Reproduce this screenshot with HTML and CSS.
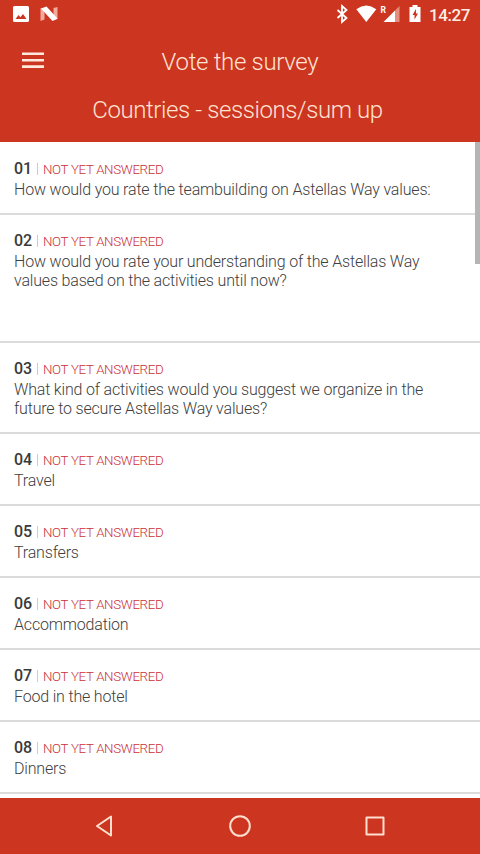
FILE: index.html
```html
<!DOCTYPE html>
<html lang="en">
<head>
<meta charset="utf-8">
<title>Vote the survey</title>
<link rel="stylesheet" href="styles.css">
</head>
<body>
<div class="screen">
  <header class="header">
    <div class="status">
      <svg class="status-left" width="60" height="28" viewBox="0 0 60 28">
        <path fill="#fff" fill-rule="evenodd" d="M14.5 6h13a1.5 1.5 0 0 1 1.500 1.500v13a1.500 1.500 0 0 1-1.500 1.500h-13a1.500 1.500 0 0 1-1.500-1.500v-13A1.500 1.500 0 0 1 14.500 6zM15.500 19h11l-3.500-5-2.600 3.200-1.900-2.200z"/>
        <path fill="#f3aa9c" d="M40.500 8l4 2v9.500l-4 1.500zM53.500 8l4-1v12l-4 1.500z"/>
        <path fill="#fff" d="M41 8.500l5.500-2L57.500 18.500 52.500 21z"/>
      </svg>
      <svg class="status-right" width="95" height="28" viewBox="334 0 95 28">
        <path fill="none" stroke="#fff" stroke-width="1.800" d="M337.500 10l9 8-4.500 4V6l4.500 4-9 8"/>
        <path fill="#fff" d="M356.300 9.200Q366.300 2 376.300 9.200L366.300 22z"/>
        <text class="roaming" x="380.500" y="13">R</text>
        <path fill="#fff" d="M383.500 22L395 10.500V22z"/>
        <path fill="#e58e7e" d="M395 10.500L399.500 6v16H395z"/>
        <path fill="#fff" fill-rule="evenodd" d="M409.500 7h3V5h5v2h3v15h-11zM416 9l-3.500 6h2v4.500l3.500-6h-2z"/>
      </svg>
      <span class="time">14:27</span>
    </div>
    <div class="bar">
      <svg class="menu" width="22" height="18" viewBox="0 0 22 18"><path stroke="#ffeadd" stroke-width="2.600" d="M0 2.800h22M0 9.300h22M0 15.600h22"/></svg>
      <h1 class="title">Vote the survey</h1>
    </div>
    <h2 class="subtitle">Countries - sessions/sum up</h2>
  </header>
  <main class="list">
    <section class="row first"><div class="meta"><b>01</b><i></i><span>NOT YET ANSWERED</span></div><p>How would you rate the teambuilding on Astellas Way values:</p></section>
    <section class="row tall"><div class="meta"><b>02</b><i></i><span>NOT YET ANSWERED</span></div><p>How would you rate your understanding of the Astellas Way<br>values based on the activities until now?</p></section>
    <section class="row double"><div class="meta"><b>03</b><i></i><span>NOT YET ANSWERED</span></div><p>What kind of activities would you suggest we organize in the<br>future to secure Astellas Way values?</p></section>
    <section class="row"><div class="meta"><b>04</b><i></i><span>NOT YET ANSWERED</span></div><p>Travel</p></section>
    <section class="row"><div class="meta"><b>05</b><i></i><span>NOT YET ANSWERED</span></div><p>Transfers</p></section>
    <section class="row"><div class="meta"><b>06</b><i></i><span>NOT YET ANSWERED</span></div><p>Accommodation</p></section>
    <section class="row"><div class="meta"><b>07</b><i></i><span>NOT YET ANSWERED</span></div><p>Food in the hotel</p></section>
    <section class="row"><div class="meta"><b>08</b><i></i><span>NOT YET ANSWERED</span></div><p>Dinners</p></section>
    <div class="scrollbar"></div>
  </main>
  <nav class="nav">
    <svg width="24" height="24" viewBox="0 0 24 24"><path d="M4 12L18 2.500v19z"/></svg>
    <svg width="24" height="24" viewBox="0 0 24 24"><circle cx="12" cy="12" r="9.800"/></svg>
    <svg width="24" height="24" viewBox="0 0 24 24"><path d="M3.500 3.500h17v17h-17z"/></svg>
  </nav>
</div>
</body>
</html>
```
FILE: styles.css
```css
* { box-sizing: border-box; }
body { margin: 0; font-family: Roboto, sans-serif; }
.screen { width: 480px; height: 854px; display: flex; flex-direction: column; overflow: hidden; background: #fff; }
.header { height: 142px; flex: none; background: #cc351f; color: #ffe3d4; }
.status { height: 28px; display: flex; align-items: center; }
.status-right { margin-left: auto; }
.roaming { font-size: 8.5px; font-weight: 700; fill: #fff; }
.time { width: 51px; font-size: 17px; line-height: 28px; font-weight: 500; letter-spacing: -0.4px; color: #ffeee5; padding-top: 1px; }
.bar { height: 66px; display: grid; grid-template-columns: 54px 1fr 54px; align-items: center; }
.menu { margin: 0 0 2px 22px; }
.title, .subtitle { margin: 0; font-size: 24px; font-weight: 300; text-align: center; white-space: nowrap; }
.title { line-height: 64px; padding-top: 2px; letter-spacing: -0.32px; }
.subtitle { line-height: 32px; padding-right: 5px; letter-spacing: -0.4px; }
.list { flex: none; height: 656px; position: relative; }
.row { height: 72px; padding: 16px 14px 0; border-bottom: 2px solid #dbdbdb; }
.row.first { height: 72.5px; padding-top: 17px; }
.row.tall { height: 128.5px; padding-top: 16.5px; }
.row.double { height: 91px; }
.meta { height: 20px; display: flex; align-items: baseline; line-height: 20px; }
.meta b { width: 23px; font-size: 16px; font-weight: 500; color: #3a3a3a; }
.meta i { width: 1px; height: 12px; margin-right: 5px; background: #ccc; align-self: center; }
.meta span { font-size: 13.3px; font-weight: 300; letter-spacing: -0.33px; color: #cb3038; white-space: nowrap; }
.row p { margin: 1px 0 0; font-size: 16px; line-height: 19px; font-weight: 300; letter-spacing: -0.18px; color: #404040; white-space: nowrap; }
.row.double p { margin-top: 2px; line-height: 18.5px; }
.scrollbar { position: absolute; top: 0; right: 0; width: 5px; height: 122px; background: #b5b5b5; }
.nav { height: 56px; flex: none; display: flex; justify-content: center; gap: 111px; align-items: center; background: #cc351f; }
.nav svg { fill: none; stroke: #ffe0cf; stroke-width: 2; stroke-linejoin: round; }
```
